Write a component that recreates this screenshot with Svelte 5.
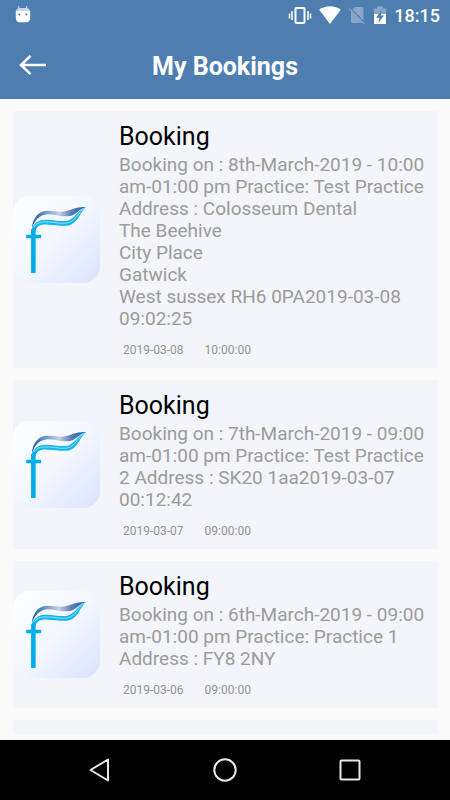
<script>
  let bookings = $state([
    {
      title: 'Booking',
      body: 'Booking on : 8th-March-2019 - 10:00 am-01:00 pm Practice: Test Practice Address : Colosseum Dental\nThe Beehive\nCity Place\nGatwick\nWest sussex RH6 0PA2019-03-08 09:02:25',
      date: '2019-03-08',
      time: '10:00:00'
    },
    {
      title: 'Booking',
      body: 'Booking on : 7th-March-2019 - 09:00 am-01:00 pm Practice: Test Practice 2 Address : SK20 1aa2019-03-07 00:12:42',
      date: '2019-03-07',
      time: '09:00:00'
    },
    {
      title: 'Booking',
      body: 'Booking on : 6th-March-2019 - 09:00 am-01:00 pm Practice: Practice 1 Address : FY8 2NY',
      date: '2019-03-06',
      time: '09:00:00'
    }
  ]);
</script>

<div class="screen">
  <header>
    <div class="status">
      <svg class="droid" width="16" height="18" viewBox="0 0 16 18">
        <path d="M3.5 1l1 4M12 1l-1 4" stroke="#d5e0ed" stroke-width="1" />
        <path d="M1 7Q1 3 5 3h6q4 0 4 4z" fill="#c8d7e8" />
        <path d="M.8 6h14.4v7q0 4-4 4.300h-6.400q-4-.3-4-4.300z" fill="#fff" />
        <circle cx="4.300" cy="9.500" r="1" fill="#4e7daf" />
        <circle cx="11.300" cy="9.500" r="1" fill="#4e7daf" />
      </svg>
      <div class="indicators">
        <svg width="24" height="20" viewBox="0 0 24 20">
          <rect x="7.500" y="2" width="9" height="15" rx="1" fill="none" stroke="#fff" stroke-width="2" />
          <path d="M1.500 7.500v5M4 5v9M20 5v9M22.500 7.500v5" stroke="#fff" stroke-width="1.500" />
        </svg>
        <svg width="22" height="20" viewBox="0 0 22 20">
          <path d="M11 18L.2 3.800Q4.700 .2 11 .2t10.800 3.600z" fill="#fff" />
        </svg>
        <svg width="18" height="20" viewBox="0 0 18 20">
          <path d="M7 1h7.500q1 0 1 1v12.500L4.500 3.500zM3 5.300L14.800 17H4q-1 0-1-1z" fill="#87a6c9" />
          <path d="M1 2.500L16.500 18" stroke="#87a6c9" stroke-width="1.300" />
        </svg>
        <svg width="14" height="20" viewBox="0 0 14 20">
          <path d="M1 2.500h3V.5h6v2h3v6H1z" fill="#87a6c9" />
          <path d="M1 8h12v10H1z" fill="#fff" />
          <path d="M8.500 4.500L3 11.800h3.300L5.500 16.500 11 9.500H7.800z" fill="#4e7daf" />
        </svg>
        <span class="clock">18:15</span>
      </div>
    </div>
    <div class="toolbar">
      <button class="back" aria-label="Back">
        <svg width="28" height="22" viewBox="0 0 28 22">
          <path d="M28 10H3M12.500 .8L3 10l9.500 9.200" fill="none" stroke="#fff" stroke-width="2.500" />
        </svg>
      </button>
      <h1>My Bookings</h1>
    </div>
  </header>

  <ul class="list">
    {#each bookings as booking}
      <li class="card">
        <svg class="logo" viewBox="0 0 88 88" aria-hidden="true">
          <defs>
            <linearGradient id="tile" x1="0" y1="0" x2="1" y2="1">
              <stop offset="0" stop-color="#fbffff" />
              <stop offset=".5" stop-color="#f3f7ff" />
              <stop offset="1" stop-color="#dbe2ff" />
            </linearGradient>
            <linearGradient id="ribbon" x1="0" y1="0" x2="1" y2="0">
              <stop offset="0" stop-color="#174e9a" />
              <stop offset=".18" stop-color="#5689bd" />
              <stop offset=".5" stop-color="#c9cde7" />
              <stop offset=".72" stop-color="#5f7db8" />
              <stop offset="1" stop-color="#1763ae" />
            </linearGradient>
          </defs>
          <rect width="88" height="88" rx="17" fill="url(#tile)" />
          <path d="M19 33C20 22 26 15 35 15C43 15 48 17 55 15C62 12.500 66 11 74 11C66 13 64 20 55 20.500C47 21 42 18.500 35 18.500C27 19 22 24 19 33z" fill="url(#ribbon)" />
          <path d="M18.500 35C21 27 26 23.500 34 24C42 24.500 48 26 55 25C63 22.500 66 14 74 11C67 17 66 28 55 30C48 30.500 42 29 35 29C27 28.500 24 31 22.500 36z" fill="#16b5ed" />
          <path d="M21 31.500C25 26 30 26 36 26.300C43 26.600 48 28.300 55 27.300C64 25 66 16 73 12" fill="none" stroke="#8de1f7" stroke-width="1" />
          <path d="M18.300 34l4.600-3v47h-4.600zM13.300 39.300H28.500v3.400H13.300z" fill="#00adeb" />
        </svg>
        <div class="info">
          <h2>{booking.title}</h2>
          <p>{booking.body}</p>
          <div class="when">
            <time>{booking.date}</time>
            <time>{booking.time}</time>
          </div>
        </div>
      </li>
    {/each}
    <li class="card rest"></li>
  </ul>

  <nav>
    <button aria-label="Back">
      <svg width="26" height="26" viewBox="0 0 26 26">
        <path d="M21 2.500v21L3.500 13z" />
      </svg>
    </button>
    <button aria-label="Home">
      <svg width="26" height="26" viewBox="0 0 26 26">
        <circle cx="13" cy="13" r="10.700" />
      </svg>
    </button>
    <button aria-label="Recent apps">
      <svg width="26" height="26" viewBox="0 0 26 26">
        <rect x="3.500" y="3.500" width="19" height="19" rx="1" />
      </svg>
    </button>
  </nav>
</div>

<style>
  :global(*, *::before, *::after) { box-sizing: border-box; margin: 0; padding: 0; }

  :global(body) {
    font-family: Roboto, sans-serif;
    background: #fafafa;
  }

  .screen {
    display: flex;
    flex-direction: column;
    height: 100vh;
  }

  svg { display: block; flex: none; }

  button {
    background: none;
    border: none;
    cursor: pointer;
  }

  header {
    flex: none;
    background: #4e7daf;
    color: #fff;
  }

  .status {
    display: flex;
    align-items: center;
    justify-content: space-between;
    height: 32px;
    padding: 0 10px 0 15px;
  }

  .droid { margin-bottom: 4px; }

  .indicators {
    display: flex;
    align-items: center;
    gap: 7px;
  }

  .clock {
    font-size: 18px;
    font-weight: 500;
    line-height: 20px;
  }

  .toolbar {
    display: grid;
    grid-template-columns: 48px 1fr 48px;
    align-items: center;
    height: 67px;
    padding: 0 10px;
  }

  .back {
    display: flex;
    padding: 8px;
  }

  h1 {
    padding-top: 2px;
    font-size: 25px;
    font-weight: 700;
    line-height: 30px;
    text-align: center;
  }

  .list {
    flex: 1;
    min-height: 0;
    display: flex;
    flex-direction: column;
    gap: 12px;
    margin: 12px 13px 6px;
    overflow-y: auto;
    scrollbar-width: none;
    list-style: none;
  }

  .card {
    flex: none;
    display: flex;
    align-items: center;
    gap: 19px;
    background: #f4f5fa;
  }

  .card.rest { flex: 1 0 12px; }

  .logo {
    width: 87px;
    height: 87px;
  }

  .info {
    flex: 1;
    min-width: 0;
    padding: 11px 10px 10px 0;
  }

  h2 {
    font-size: 25px;
    font-weight: 400;
    line-height: 30px;
    color: #000;
  }

  p {
    margin-top: 2px;
    font-size: 19px;
    line-height: 22px;
    color: #9b9b9b;
    white-space: pre-line;
  }

  .when {
    display: flex;
    gap: 21px;
    margin-top: 12px;
    padding-left: 4px;
    font-size: 12px;
    line-height: 16px;
    color: #929292;
  }

  nav {
    flex: none;
    display: flex;
    align-items: center;
    justify-content: center;
    gap: 75px;
    height: 60px;
    background: #000;
  }

  nav button { padding: 12px; }

  nav svg {
    fill: none;
    stroke: #e8e8e8;
    stroke-width: 2;
    stroke-linejoin: round;
  }
</style>
